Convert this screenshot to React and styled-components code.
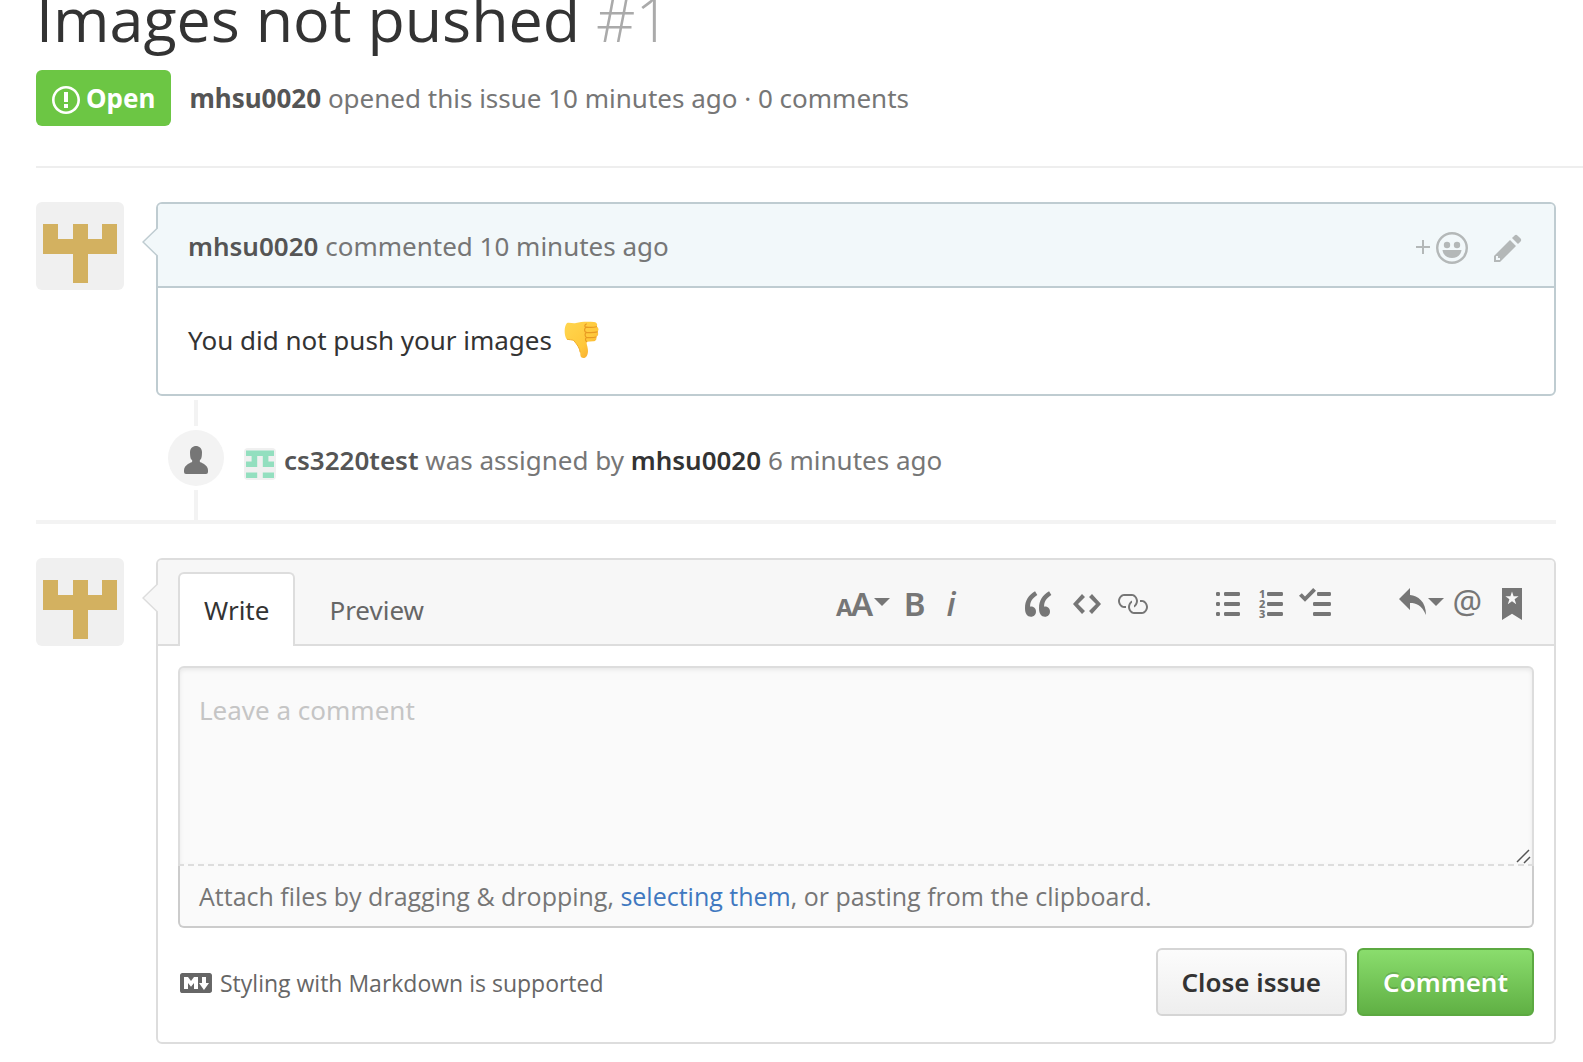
import React from "react";
import styled, { createGlobalStyle, css } from "styled-components";

const GlobalStyle = createGlobalStyle`
  *, *::before, *::after { box-sizing: border-box; }
  body {
    margin: 0;
    background: #fff;
    color: #333;
    font-family: "Noto Sans", "Open Sans", sans-serif;
    font-size: 26px;
    line-height: 40px;
  }
  button, textarea { font-family: inherit; }
`;

const Page = styled.main`
  padding-left: 36px;
  overflow-x: hidden;
`;

const IssueHeader = styled.header`
  padding-bottom: 40px;
  border-bottom: 2px solid #eee;
`;

const Title = styled.h1`
  margin: -18px 0 14px;
  font-family: "Open Sans", sans-serif;
  font-size: 61px;
  font-weight: 400;
  line-height: 74px;
  white-space: nowrap;
`;

const IssueNumber = styled.span`
  color: #aaa;
  font-weight: 300;
`;

const Meta = styled.div`
  display: flex;
  align-items: center;
  gap: 18px;
  color: #767676;
`;

const State = styled.span`
  display: inline-flex;
  align-items: center;
  gap: 6px;
  height: 56px;
  padding: 0 16px;
  border-radius: 6px;
  background: #6cc644;
  color: #fff;
  font-weight: 700;

  svg { margin-top: 4px; }
`;

const Author = styled.a`
  color: ${(p) => (p.$dark ? "#333" : "#555")};
  font-weight: ${(p) => (p.$heavy ? 700 : 600)};
  text-decoration: none;
`;

const Discussion = styled.div`
  padding: 34px 27px 0 0;
`;

const Entry = styled.article`
  display: flex;
  align-items: flex-start;
  gap: 32px;
`;

const AvatarLink = styled.a`
  display: flex;
  flex: none;
  overflow: hidden;
  border-radius: 6px;
`;

const Bubble = styled.div`
  position: relative;
  flex: 1;
  min-width: 0;
  border: 2px solid ${(p) => (p.$own ? "#bfccd1" : "#ddd")};
  border-radius: 6px;
`;

const Pointer = styled.svg`
  position: absolute;
  top: 23px;
  left: -16px;
  fill: ${(p) => (p.$own ? "#f2f8fa" : "#f7f7f7")};
  stroke: ${(p) => (p.$own ? "#bfccd1" : "#ddd")};
  stroke-width: 1.5;
`;

const CommentHeader = styled.div`
  display: flex;
  align-items: center;
  justify-content: space-between;
  height: 84px;
  padding: 2px 24px 0 30px;
  border-bottom: 2px solid #bfccd1;
  border-radius: 4px 4px 0 0;
  background: #f2f8fa;
  color: #767676;
`;

const CommentActions = styled.div`
  display: flex;
  align-items: center;
  gap: 10px;
  padding-top: 4px;
`;

const PlainButton = styled.button`
  display: inline-flex;
  align-items: center;
  justify-content: center;
  gap: 4px;
  height: 40px;
  padding: 0 8px;
  border: 0;
  background: none;
  color: #b4b8b8;
  cursor: pointer;
`;

const CommentBody = styled.div`
  display: flex;
  align-items: center;
  gap: 12px;
  height: 106px;
  padding: 0 30px 2px;
`;

const Event = styled.div`
  display: flex;
  gap: 20px;
  padding-left: 132px;
`;

const Rail = styled.div`
  display: flex;
  flex-direction: column;
  align-items: center;
  gap: 4px;
  padding-top: 4px;
`;

const RailLine = styled.span`
  width: 4px;
  height: ${(p) => (p.$long ? "30px" : "26px")};
  background: #f3f3f3;
`;

const EventBadge = styled.span`
  display: flex;
  align-items: center;
  justify-content: center;
  width: 56px;
  height: 56px;
  border-radius: 50%;
  background: #f3f3f3;
  color: #767676;

  svg { margin-top: 4px; }
`;

const EventText = styled.div`
  display: flex;
  align-items: center;
  gap: 8px;
  height: 56px;
  margin-top: 36px;
  color: #767676;

  svg { margin-top: 8px; }
`;

const Divider = styled.hr`
  height: 4px;
  margin: 0 0 34px;
  border: 0;
  background: #f3f3f3;
`;

const EditorHead = styled.div`
  display: flex;
  align-items: flex-end;
  justify-content: space-between;
  height: 86px;
  padding: 0 20px;
  border-bottom: 2px solid #ddd;
  border-radius: 4px 4px 0 0;
  background: #f7f7f7;
`;

const Tabs = styled.div`
  display: flex;
  margin-bottom: -2px;
`;

const Tab = styled.button`
  height: 74px;
  padding: 0 24px;
  border: 2px solid transparent;
  border-bottom: 0;
  background: none;
  color: #666;
  font-size: 26px;
  line-height: 40px;
  cursor: pointer;

  & + & { margin-left: 8px; }

  ${(p) =>
    p.$selected &&
    css`
      border-color: #ddd;
      border-radius: 6px 6px 0 0;
      background: #fff;
      color: #333;
    `}
`;

const Toolbar = styled.div`
  display: flex;
  align-self: center;
  gap: 48px;
  padding-top: 4px;
`;

const ToolGroup = styled.div`
  display: flex;
`;

const Tool = styled.button`
  display: flex;
  align-items: center;
  justify-content: ${(p) => p.$align || "center"};
  gap: 2px;
  width: ${(p) => p.$width || 44}px;
  height: 32px;
  padding: 0;
  border: 0;
  background: none;
  color: #767676;
  cursor: pointer;

  svg { flex: none; overflow: visible; }
`;

const CaretIcon = styled.svg`
  margin-bottom: 4px;
`;

const Form = styled.form`
  padding: 20px 20px 26px;
`;

const InputArea = styled.div`
  position: relative;
`;

const CommentInput = styled.textarea`
  display: block;
  width: 100%;
  height: 200px;
  padding: 22px 19px;
  border: 2px solid #ddd;
  border-bottom-style: dashed;
  border-radius: 6px 6px 0 0;
  outline: 0;
  background: #fafafa;
  box-shadow: inset 0 2px 4px rgba(0, 0, 0, 0.075);
  color: #333;
  font-size: 26px;
  line-height: 40px;
  resize: none;

  &::placeholder { color: #c5c5c5; opacity: 1; }
`;

const Grip = styled.svg`
  position: absolute;
  right: 2px;
  bottom: 2px;
  pointer-events: none;
`;

const AttachNote = styled.p`
  height: 62px;
  margin: 0;
  padding: 10px 19px;
  border: 2px solid #ccc;
  border-top: 0;
  border-radius: 0 0 6px 6px;
  background: #fafafa;
  color: #767676;
  font-family: "Open Sans", sans-serif;
  font-size: 25px;
`;

const TextLink = styled.a`
  color: #4078c0;
  text-decoration: none;
`;

const FormFooter = styled.div`
  display: flex;
  align-items: center;
  justify-content: space-between;
  margin-top: 20px;
`;

const MarkdownLink = styled.a`
  display: flex;
  align-items: center;
  gap: 8px;
  padding: 2px 0 0 2px;
  color: #666;
  font-family: "Open Sans", sans-serif;
  font-size: 23px;
  text-decoration: none;
`;

const Buttons = styled.div`
  display: flex;
  gap: 10px;
`;

const Button = styled.button`
  height: 68px;
  padding: 0 24px;
  border: 2px solid #d5d5d5;
  border-radius: 6px;
  background: linear-gradient(#fcfcfc, #eee);
  color: #333;
  font-size: 26px;
  font-weight: 600;
  line-height: 40px;
  cursor: pointer;

  ${(p) =>
    p.$primary &&
    css`
      border-color: #5ca941;
      background: linear-gradient(#8add6d, #60b044);
      color: #fff;
      text-shadow: 0 -2px 0 rgba(0, 0, 0, 0.15);
    `}
`;

const Icon = ({ w, d, children }) => (
  <svg
    width={w * 2}
    height="32"
    viewBox={`0 0 ${w} 16`}
    fill="currentColor"
    fontFamily="Noto Sans, Open Sans, sans-serif"
    aria-hidden="true"
  >
    {d && <path fillRule="evenodd" d={d} />}
    {children}
  </svg>
);

const Caret = () => (
  <CaretIcon width="16" height="8" viewBox="0 0 16 8" fill="currentColor" aria-hidden="true">
    <path d="M0 0h16L8 8z" />
  </CaretIcon>
);

const UserAvatar = () => (
  <svg width="88" height="88" viewBox="0 0 88 88" aria-hidden="true">
    <path fill="#f0f0f0" d="M0 0h88v88H0z" />
    <path fill="#d3b160" d="M7 22h15v15h15V22h15v15h14V22h15v30H52v29H37V52H7z" />
  </svg>
);

const AssigneeAvatar = () => (
  <svg width="32" height="32" viewBox="0 0 32 32" aria-hidden="true">
    <rect width="32" height="32" rx="4" fill="#f0f0f0" />
    <path
      fill="#93dfbf"
      d="M2 2.500h28v5.500h-5.600v5.500H30v5.500H18.800V8h-5.600v11H2v-5.500h5.600V8H2zM2 24.500h11.200V30H2zM18.800 24.500H30V30H18.800z"
    />
  </svg>
);

const ThumbsDown = () => (
  <svg width="35" height="38" viewBox="0 0 35 38" role="img" aria-label="thumbs down">
    <defs>
      <linearGradient id="skin" x1="0" y1="0" x2="1" y2="1">
        <stop offset="0" stopColor="#ffd64f" />
        <stop offset=".6" stopColor="#ffc83b" />
        <stop offset="1" stopColor="#f5a02c" />
      </linearGradient>
    </defs>
    <path
      fill="url(#skin)"
      d="M3 2C6 1 9 3 12 2c5-1.500 12-1.500 18-1 3 .3 4 3 2.600 4.600C35 7 35 9.500 33.500 10.700 35 13 34 15 32.200 16c.8 2.500-.5 4.300-3 4.300l-6.400.4c-.8 1.800 1.200 5 1.200 9 0 4-1.500 7.300-4.700 7.300-2.800 0-2.900-2.200-3.100-5.200C15.900 27 12.600 23 9.800 19.600 7.500 18.500 4 19.500 2.500 18 0 14 0 5 3 2z"
    />
    <path
      fill="none"
      stroke="#e89a22"
      strokeWidth="1.200"
      strokeLinecap="round"
      d="M32.500 5.700c-3 .9-7 .7-10.300.5M33.500 10.800c-3.500 1-7.500.9-11.300.6M32.200 16c-3 .8-6.200.8-9.700.5M22.300 3c-2 1-2 3 0 3.200-2.300 1-2.300 4.400 0 5.200-1.800 1-1.500 4.300.3 5.100-1.500.8-1.500 3 .2 4.200"
    />
    <path fill="none" stroke="#f3ae2b" strokeWidth="1" d="M3 18.200c2.500.7 5 .3 6.800 1.400 2.800 3.400 6.100 7.400 6.400 11.800" />
  </svg>
);

const PATHS = {
  issue:
    "M7 2.300c3.140 0 5.700 2.560 5.700 5.700s-2.560 5.700-5.700 5.700A5.710 5.710 0 0 1 1.300 8c0-3.140 2.560-5.700 5.700-5.700zM7 1C3.140 1 0 4.140 0 8s3.140 7 7 7 7-3.140 7-7-3.140-7-7-7zm1 3H6v5h2V4zm0 6H6v2h2v-2z",
  pencil:
    "M0 12v3h3l8-8-3-3-8 8zm3 2H1v-2h1v1h1v1zm10.300-9.300L12 6 9 3l1.300-1.300a.996.996 0 0 1 1.410 0l1.590 1.590c.39.39.39 1.020 0 1.410z",
  person:
    "M12 14.002a.998.998 0 0 1-.998.998H1.001A1 1 0 0 1 0 13.999V13c0-2.633 4-4 4-4s.229-.409 0-1c-.841-.62-.944-1.590-1-4 .173-2.413 1.867-3 3-3s2.827.586 3 3c-.056 2.410-.159 3.380-1 4-.229.59 0 1 0 1s4 1.367 4 4v1.002z",
  quote:
    "M6.160 3.500C3.730 5.060 2.550 6.670 2.550 9.360c.16-.05.3-.05.44-.05 1.270 0 2.500.86 2.500 2.410 0 1.610-1.030 2.610-2.500 2.610-1.900 0-2.990-1.520-2.990-4.250 0-3.800 1.750-6.530 5.020-8.420L6.160 3.500zm7 0c-2.430 1.560-3.610 3.170-3.610 5.860.16-.05.3-.05.44-.05 1.270 0 2.500.86 2.500 2.410 0 1.610-1.030 2.610-2.500 2.610-1.890 0-2.980-1.520-2.980-4.250 0-3.800 1.750-6.530 5.020-8.420l1.140 1.840h-.01z",
  code: "M9.500 3L8 4.500 11.500 8 8 11.500 9.500 13 14 8 9.500 3zm-5 0L0 8l4.500 5L6 11.500 2.500 8 6 4.500 4.500 3z",
  link:
    "M4 9h1v1H4c-1.500 0-3-1.690-3-3.500S2.550 3 4 3h4c1.450 0 3 1.690 3 3.500 0 1.410-.91 2.720-2 3.250V8.590c.58-.45 1-1.270 1-2.090C10 5.220 8.980 4 8 4H4c-.98 0-2 1.220-2 2.500S3 9 4 9zm9-3h-1v1h1c1 0 2 1.220 2 2.500S13.980 12 13 12H9c-.98 0-2-1.220-2-2.500 0-.83.42-1.640 1-2.090V6.250c-1.090.53-2 1.840-2 3.250C6 11.310 7.550 13 9 13h4c1.450 0 3-1.690 3-3.500S14.500 6 13 6z",
  bullets:
    "M4.600 2h6.800c.6 0 .6.400.6 1s0 1-.6 1H4.600C4 4 4 3.600 4 3s0-1 .6-1zM4.600 7h6.800c.6 0 .6.400.6 1s0 1-.6 1H4.600C4 9 4 8.600 4 8s0-1 .6-1zM4.600 12h6.800c.6 0 .6.400.6 1s0 1-.6 1H4.600c-.6 0-.6-.4-.6-1s0-1 .6-1zM.6 2h.8c.6 0 .6.400.6 1s0 1-.6 1H.6C0 4 0 3.600 0 3s0-1 .6-1zM.6 7h.8c.6 0 .6.400.6 1s0 1-.6 1H.6C0 9 0 8.600 0 8s0-1 .6-1zM.6 12h.8c.6 0 .6.400.6 1s0 1-.6 1H.6c-.6 0-.6-.4-.6-1s0-1 .6-1z",
  numbers:
    "M4.600 2h6.800c.6 0 .6.400.6 1s0 1-.6 1H4.600C4 4 4 3.600 4 3s0-1 .6-1zM4.600 7h6.800c.6 0 .6.400.6 1s0 1-.6 1H4.600C4 9 4 8.600 4 8s0-1 .6-1zM4.600 12h6.800c.6 0 .6.400.6 1s0 1-.6 1H4.600c-.6 0-.6-.4-.6-1s0-1 .6-1z",
  tasks:
    "M15.410 9H7.590C7 9 7 8.590 7 8c0-.59 0-1 .59-1h7.810c.59 0 .59.41.59 1 0 .59 0 1-.59 1h.01zM9.590 4C9 4 9 3.590 9 3c0-.59 0-1 .59-1h5.810c.59 0 .59.41.59 1 0 .59 0 1-.59 1H9.590zM0 3.910l1.410-1.300L3 4.200 7.090 0 8.500 1.410 3 6.910l-3-3zM7.590 12h7.810c.59 0 .59.41.59 1 0 .59 0 1-.59 1H7.590C7 14 7 13.590 7 13c0-.59 0-1 .59-1z",
  reply: "M6 3.500c3.920.44 8 3.125 8 10-2.312-5.062-4.750-6-8-6V11L.5 5.500 6 0v3.500z",
  bookmark:
    "M0 0h10v16l-5-3.100L0 16zM5 1.800l.8 2.300h2.500L6.300 5.600l.8 2.500L5 6.600 2.900 8.100l.8-2.500-2-1.500h2.500z",
  markdown:
    "M14.850 3H1.150C.52 3 0 3.520 0 4.150v7.690C0 12.480.52 13 1.150 13h13.690c.64 0 1.150-.52 1.150-1.150v-7.700C16 3.520 15.480 3 14.850 3zM9 11H7V8L5.500 9.920 4 8v3H2V5h2l1.500 2L7 5h2v6zm2.990.5L9.500 8H11V5h2v3h1.500l-2.510 3.500z",
};

const EmojiButtonIcon = () => (
  <svg width="54" height="32" viewBox="0 0 54 32" aria-hidden="true">
    <path stroke="currentColor" strokeWidth="2" d="M2 15h14M9 8v14" />
    <circle cx="38" cy="16" r="14.800" fill="none" stroke="currentColor" strokeWidth="2.400" />
    <circle cx="33" cy="13" r="3.200" fill="currentColor" />
    <circle cx="43" cy="13" r="3.200" fill="currentColor" />
    <path fill="currentColor" d="M28.500 18h19c-.5 5-4.500 8-9.500 8s-9-3-9.500-8z" />
  </svg>
);

const MainToolbar = () => (
  <Toolbar role="toolbar" aria-label="Formatting">
    <ToolGroup>
      <Tool type="button" aria-label="Add header text" $width={52} $align="flex-start">
        <Icon w={18}>
          <text x="0" y="14" fontSize="12" fontWeight="700">A</text>
          <text x="7.500" y="14" fontSize="16.500" fontWeight="600">A</text>
        </Icon>
        <Caret />
      </Tool>
      <Tool type="button" aria-label="Add bold text" $width={54}>
        <Icon w={10}>
          <text x="-.6" y="14" fontSize="16.500" fontWeight="600">B</text>
        </Icon>
      </Tool>
      <Tool type="button" aria-label="Add italic text" $width={20}>
        <Icon w={6}>
          <text x=".3" y="14" fontSize="16.500" fontWeight="600" fontStyle="italic" fontFamily="Open Sans">i</text>
        </Icon>
      </Tool>
    </ToolGroup>
    <ToolGroup>
      <Tool type="button" aria-label="Insert a quote" $width={58}>
        <Icon w={14} d={PATHS.quote} />
      </Tool>
      <Tool type="button" aria-label="Insert code" $width={38}>
        <Icon w={14} d={PATHS.code} />
      </Tool>
      <Tool type="button" aria-label="Add a link" $width={52}>
        <Icon w={16} d={PATHS.link} />
      </Tool>
    </ToolGroup>
    <ToolGroup>
      <Tool type="button" aria-label="Add a bulleted list">
        <Icon w={12} d={PATHS.bullets} />
      </Tool>
      <Tool type="button" aria-label="Add a numbered list" $width={42}>
        <Icon w={12} d={PATHS.numbers}>
          <g fontSize="5.500" fontWeight="800">
            <text x="0" y="5">1</text>
            <text x="0" y="10">2</text>
            <text x="0" y="15">3</text>
          </g>
        </Icon>
      </Tool>
      <Tool type="button" aria-label="Add a task list" $width={46}>
        <Icon w={16} d={PATHS.tasks} />
      </Tool>
    </ToolGroup>
    <ToolGroup>
      <Tool type="button" aria-label="Insert a reply" $width={58} $align="flex-end">
        <Icon w={14} d={PATHS.reply} />
        <Caret />
      </Tool>
      <Tool type="button" aria-label="Mention a user" $width={46}>
        <Icon w={14}>
          <text x="-.2" y="13" fontSize="16.500">@</text>
        </Icon>
      </Tool>
      <Tool type="button" aria-label="Reference an issue">
        <Icon w={10} d={PATHS.bookmark} />
      </Tool>
    </ToolGroup>
  </Toolbar>
);

export default function App() {
  return (
    <Page>
      <GlobalStyle />
      <IssueHeader>
        <Title>
          Images not pushed <IssueNumber>#1</IssueNumber>
        </Title>
        <Meta>
          <State>
            <Icon w={14} d={PATHS.issue} />
            Open
          </State>
          <span>
            <Author href="#" $heavy>mhsu0020</Author> opened this issue 10 minutes ago · 0 comments
          </span>
        </Meta>
      </IssueHeader>

      <Discussion>
        <Entry>
          <AvatarLink href="#" aria-label="mhsu0020">
            <UserAvatar />
          </AvatarLink>
          <Bubble $own>
            <CommentHeader>
              <span>
                <Author href="#">mhsu0020</Author> commented 10 minutes ago
              </span>
              <CommentActions>
                <PlainButton type="button" aria-label="Add your reaction">
                  <EmojiButtonIcon />
                </PlainButton>
                <PlainButton type="button" aria-label="Edit comment">
                  <Icon w={14} d={PATHS.pencil} />
                </PlainButton>
              </CommentActions>
            </CommentHeader>
            <Pointer $own width="16" height="30" viewBox="0 0 16 30" aria-hidden="true">
              <path d="M16 0.500L1 15l15 14.500" />
            </Pointer>
            <CommentBody>
              You did not push your images
              <ThumbsDown />
            </CommentBody>
          </Bubble>
        </Entry>

        <Event>
          <Rail>
            <RailLine />
            <EventBadge>
              <Icon w={12} d={PATHS.person} />
            </EventBadge>
            <RailLine $long />
          </Rail>
          <EventText>
            <AssigneeAvatar />
            <span>
              <Author href="#">cs3220test</Author> was assigned by{" "}
              <Author href="#" $dark>mhsu0020</Author> 6 minutes ago
            </span>
          </EventText>
        </Event>

        <Divider />

        <Entry>
          <AvatarLink href="#" aria-label="mhsu0020">
            <UserAvatar />
          </AvatarLink>
          <Bubble>
            <EditorHead>
              <Tabs role="tablist">
                <Tab type="button" role="tab" aria-selected="true" $selected>Write</Tab>
                <Tab type="button" role="tab" aria-selected="false">Preview</Tab>
              </Tabs>
              <MainToolbar />
            </EditorHead>
            <Pointer width="16" height="30" viewBox="0 0 16 30" aria-hidden="true">
              <path d="M16 0.500L1 15l15 14.500" />
            </Pointer>
            <Form onSubmit={(e) => e.preventDefault()}>
              <InputArea>
                <CommentInput aria-label="Leave a comment" placeholder="Leave a comment" />
                <Grip width="16" height="16" viewBox="0 0 16 16" aria-hidden="true">
                  <path stroke="#555" strokeWidth="1.500" d="M1 14L13 2M8 15l6-6" />
                </Grip>
              </InputArea>
              <AttachNote>
                Attach files by dragging &amp; dropping, <TextLink href="#">selecting them</TextLink>, or
                pasting from the clipboard.
              </AttachNote>
              <FormFooter>
                <MarkdownLink href="#">
                  <Icon w={16} d={PATHS.markdown} />
                  Styling with Markdown is supported
                </MarkdownLink>
                <Buttons>
                  <Button type="button">Close issue</Button>
                  <Button type="submit" $primary>Comment</Button>
                </Buttons>
              </FormFooter>
            </Form>
          </Bubble>
        </Entry>
      </Discussion>
    </Page>
  );
}
